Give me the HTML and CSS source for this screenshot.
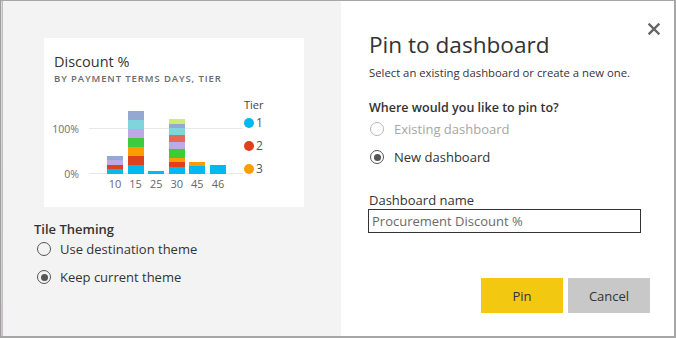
FILE: index.html
```html
<!DOCTYPE html>
<html>
<head>
<meta charset="utf-8">
<link rel="stylesheet" href="styles.css">
</head>
<body>
<div class="dialog">
  <div class="edge"></div>
  <div class="left">
    <div class="card">
      <div class="tile-title">Discount %</div>
      <div class="tile-sub">BY PAYMENT TERMS DAYS, TIER</div>
      <div class="chart">
        <div class="yaxis"><span>100%</span><span>0%</span></div>
        <div class="plotwrap">
          <div class="plot">
            <div class="bar">
              <i class="c-bg" style="height:4px"></i><i class="c-lv" style="height:5px"></i><i class="c-rd" style="height:4px"></i><i class="c-bl" style="height:5px"></i>
            </div>
            <div class="bar">
              <i class="c-bg" style="height:9px"></i><i class="c-tl" style="height:9px"></i><i class="c-lv" style="height:9px"></i><i class="c-gr" style="height:9px"></i><i class="c-or" style="height:9px"></i><i class="c-rd" style="height:9px"></i><i class="c-bl" style="height:9px"></i>
            </div>
            <div class="bar">
              <i class="c-bl" style="height:3px"></i>
            </div>
            <div class="bar">
              <i class="c-lm" style="height:5px"></i><i class="c-bg" style="height:4px"></i><i class="c-tl" style="height:7px"></i><i class="c-sm" style="height:7px"></i><i class="c-lv" style="height:7px"></i><i class="c-gr" style="height:9px"></i><i class="c-or" style="height:4px"></i><i class="c-rd" style="height:5px"></i><i class="c-bl" style="height:7px"></i>
            </div>
            <div class="bar">
              <i class="c-or" style="height:4px"></i><i class="c-bl" style="height:8px"></i>
            </div>
            <div class="bar">
              <i class="c-bl" style="height:9px"></i>
            </div>
          </div>
          <div class="xlabels">
            <span>10</span><span>15</span><span>25</span><span>30</span><span>45</span><span>46</span>
          </div>
        </div>
        <div class="legend">
          <div class="legend-title">Tier</div>
          <div class="legend-item"><span class="dot c-bl"></span>1</div>
          <div class="legend-item"><span class="dot c-rd"></span>2</div>
          <div class="legend-item"><span class="dot c-or"></span>3</div>
        </div>
      </div>
    </div>
    <div class="theming">
      <div class="section-label">Tile Theming</div>
      <div class="radio r-left"><span class="circle"></span>Use destination theme</div>
      <div class="radio r-left"><span class="circle checked"></span>Keep current theme</div>
    </div>
  </div>
  <div class="right">
    <div class="header">
      <div class="title">Pin to dashboard</div>
      <button class="close" aria-label="Close">
        <svg width="12" height="12" viewBox="0 0 12 12"><path d="M1.5 1.5 L10.5 10.5 M10.5 1.5 L1.5 10.5" stroke="#666" stroke-width="2.4" stroke-linecap="square" fill="none"/></svg>
      </button>
    </div>
    <div class="subtitle">Select an existing dashboard or create a new one.</div>
    <div class="question">Where would you like to pin to?</div>
    <div class="options">
      <div class="radio r-right disabled"><span class="circle"></span>Existing dashboard</div>
      <div class="radio r-right"><span class="circle checked"></span>New dashboard</div>
    </div>
    <div class="field-label">Dashboard name</div>
    <div class="input">Procurement Discount %</div>
    <div class="buttons">
      <button class="btn primary">Pin</button>
      <button class="btn secondary">Cancel</button>
    </div>
  </div>
</div>
</body>
</html>
```

FILE: styles.css
```css
* { box-sizing: border-box; }
html, body { margin: 0; padding: 0; background: #ffffff; }
body {
  width: 676px;
  height: 338px;
  overflow: hidden;
  font-family: "Open Sans", "Liberation Sans", sans-serif;
  color: #333333;
}
.dialog {
  width: 676px;
  height: 338px;
  display: flex;
  border-top: 1px solid #a6a6a6;
  border-right: 2px solid #a6a6a6;
  border-bottom: 2px solid #a6a6a6;
  border-left: 1px solid #9e9e9e;
}
.edge {
  width: 2px;
  background: linear-gradient(to bottom, #d8d8d8 0, #d0d0d0 300px, #a9d5e8 304px, #a9d5e8 100%);
  border-right: 1px solid #c0c0c0;
  flex: none;
}
.left {
  width: 338px;
  flex: none;
  background: #f3f3f3;
  padding: 37px 0 0 31px;
}
.card {
  width: 260px;
  height: 169px;
  margin-left: 10px;
  background: #ffffff;
  padding: 15px 10px 0 10px;
}
.tile-title {
  font-size: 14.5px;
  line-height: 18px;
  color: #333;
}
.tile-sub {
  margin-top: 2px;
  font-size: 9.5px;
  line-height: 12px;
  font-weight: 600;
  letter-spacing: 0.9px;
  color: #6b6b6b;
}
.chart {
  display: flex;
  margin-top: 13px;
  align-items: flex-start;
}
.yaxis {
  width: 25px;
  height: 73px;
  margin-top: 10px;
  padding-top: 14px;
  display: flex;
  flex-direction: column;
  justify-content: space-between;
  align-items: flex-end;
  font-size: 10.5px;
  line-height: 14px;
  color: #6e6e6e;
  white-space: nowrap;
}
.plotwrap {
  margin-left: 10px;
  margin-top: 10px;
  width: 154px;
}
.plot {
  height: 66px;
  display: flex;
  align-items: flex-end;
  gap: 4.6px;
  padding-left: 18px;
  background:
    linear-gradient(#e8e8e8, #e8e8e8) 0 20px / 100% 1px no-repeat,
    linear-gradient(#e8e8e8, #e8e8e8) 0 65px / 100% 1px no-repeat;
}
.bar {
  width: 16px;
  display: flex;
  flex-direction: column;
}
.bar i { display: block; width: 16px; }
.xlabels {
  display: flex;
  gap: 4.6px;
  padding-left: 18px;
  margin-top: 3px;
  font-size: 11px;
  line-height: 14px;
  color: #666;
}
.xlabels span { width: 16px; white-space: nowrap; display: flex; justify-content: center; }
.legend {
  margin-left: 1px;
  font-size: 11px;
  line-height: 14px;
  color: #333;
}
.legend-title { color: #444; }
.legend-item {
  display: flex;
  align-items: center;
  margin-top: 9px;
  font-size: 12px;
  color: #555;
}
.legend-title + .legend-item { margin-top: 4px; }
.dot {
  width: 10px;
  height: 10px;
  border-radius: 50%;
  margin-right: 2px;
  display: inline-block;
}
.c-bl { background: #01b8f0; }
.c-rd { background: #e0401a; }
.c-or { background: #fe9c00; }
.c-gr { background: #3ccc39; }
.c-lv { background: #bca9e6; }
.c-tl { background: #80d5dd; }
.c-bg { background: #93a9d2; }
.c-sm { background: #e26a54; }
.c-lm { background: #cdec76; }

.theming { margin-top: 14px; }
.section-label {
  font-size: 13px;
  line-height: 16px;
  font-weight: 600;
  color: #333;
}
.radio {
  display: flex;
  align-items: center;
  height: 24px;
  font-size: 13px;
  color: #333;
}
.r-left + .r-left { margin-top: 4px; }
.circle {
  width: 14px;
  height: 14px;
  border-radius: 50%;
  border: 1.8px solid #555;
  margin-left: 3px;
  margin-right: 9px;
  display: inline-flex;
  align-items: center;
  justify-content: center;
  flex: none;
}
.circle.checked::after {
  content: "";
  width: 7px;
  height: 7px;
  border-radius: 50%;
  background: #555;
}
.disabled { color: #a6a6a6; }
.disabled .circle { border-color: #b8b8b8; }

.right {
  flex: 1;
  background: #ffffff;
  padding: 22px 14px 0 28px;
}
.header {
  display: flex;
  justify-content: space-between;
  align-items: flex-start;
}
.title {
  margin-top: 8px;
  font-size: 22.6px;
  line-height: 28px;
  font-weight: 400;
  color: #333;
}
.close {
  width: 12px;
  height: 12px;
  padding: 0;
  border: 0;
  background: none;
  display: block;
}
.close svg { display: block; }
.subtitle {
  margin-top: 6px;
  font-size: 11.3px;
  line-height: 16px;
  color: #333;
}
.question {
  margin-top: 18px;
  font-size: 12.5px;
  line-height: 18px;
  font-weight: 600;
  color: #333;
}
.options {
  display: flex;
  flex-direction: column;
  gap: 4px;
}
.r-right .circle { margin-left: 1px; margin-right: 10px; }
.field-label {
  margin-top: 22px;
  font-size: 13px;
  line-height: 18px;
  color: #333;
}
.input {
  width: 273px;
  height: 24px;
  margin-left: -1px;
  border: 1px solid #333;
  padding: 0 3px;
  font-size: 13px;
  line-height: 22px;
  color: #6a6a6a;
}
.buttons {
  display: flex;
  justify-content: flex-end;
  gap: 5px;
  margin-top: 45px;
  padding-right: 10px;
}
.btn {
  width: 82px;
  height: 35px;
  border: 0;
  font-family: inherit;
  font-size: 13px;
  color: #333;
}
.primary { background: #f2c811; }
.secondary { background: #c8c8c8; }
```
